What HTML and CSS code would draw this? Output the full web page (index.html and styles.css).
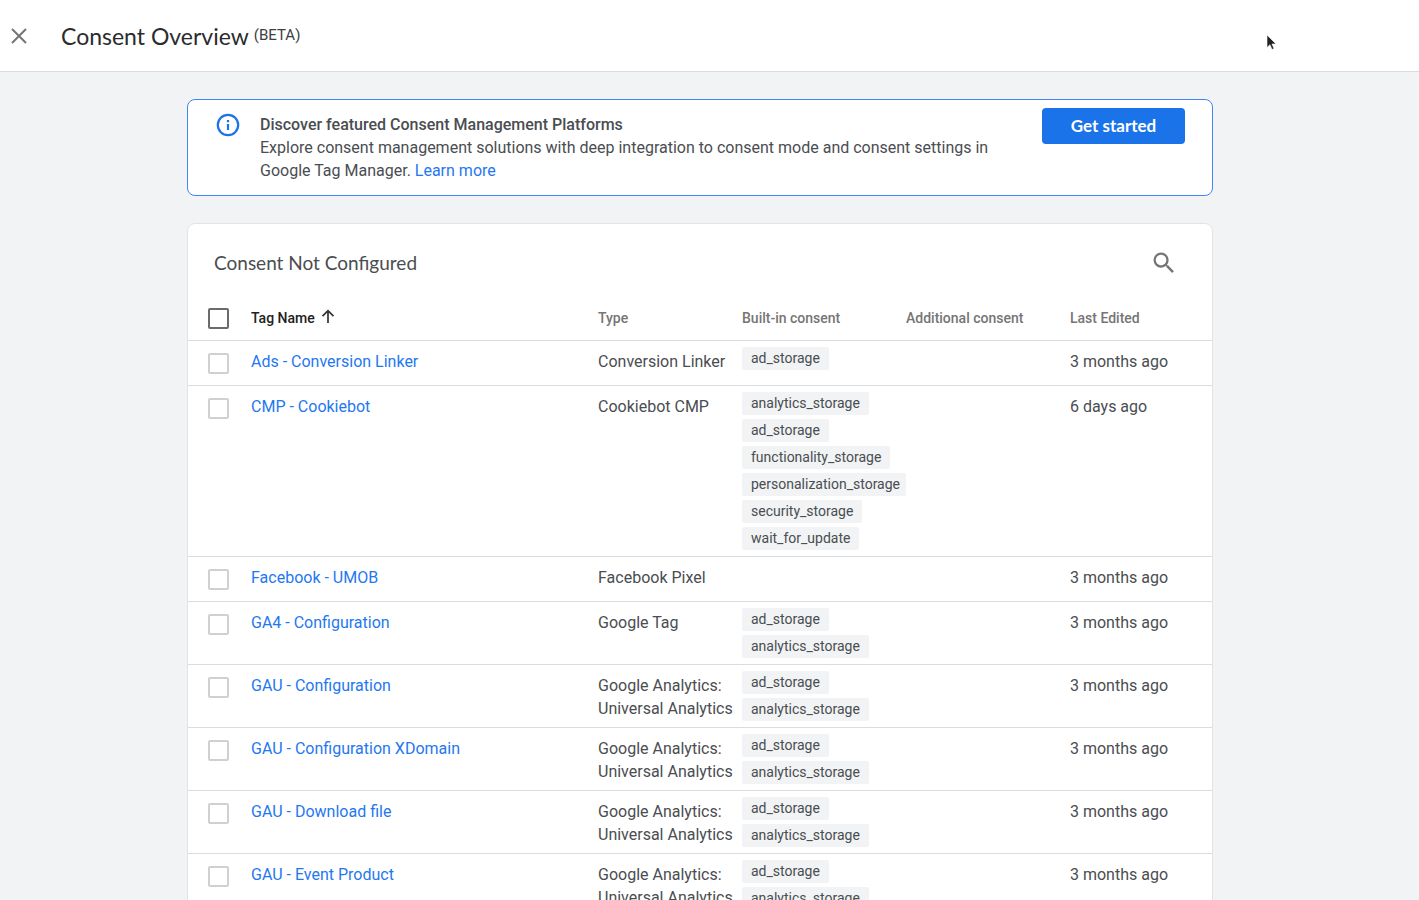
FILE: index.html
```html
<!DOCTYPE html>
<html lang="en">
<head>
<meta charset="utf-8">
<meta name="viewport" content="width=device-width, initial-scale=1">
<title>Consent Overview</title>
<link rel="stylesheet" href="styles.css">
</head>
<body>
<header class="topbar">
  <button class="icon-button" type="button" aria-label="Close">
    <svg width="16" height="16" viewBox="0 0 16 16" fill="none" stroke="#757575" stroke-width="2"><path d="M1 1l14 14M15 1L1 15"/></svg>
  </button>
  <h1 class="page-title">Consent Overview</h1>
  <span class="beta">(BETA)</span>
</header>
<svg class="cursor" width="14" height="18" viewBox="0 0 14 18" aria-hidden="true"><path d="M2 1v12.500l3-2.800 2 4.800 2-.9-2-4.600h4z" fill="#222" stroke="#fff" stroke-width=".6"/></svg>
<main class="content">
  <section class="notice">
    <svg class="notice-icon" width="24" height="24" viewBox="0 0 24 24" fill="none" stroke="#1a73e8" stroke-width="2.200"><circle cx="12" cy="12" r="10.200"/><path d="M12 11v6M12 7v2.200"/></svg>
    <div class="notice-text">
      <h2 class="notice-title">Discover featured Consent Management Platforms</h2>
      <p class="notice-body">Explore consent management solutions with deep integration to consent mode and consent settings in Google Tag Manager. <a class="link" href="#">Learn more</a></p>
    </div>
    <button class="primary-button" type="button">Get started</button>
  </section>
  <section class="card">
    <div class="card-header">
      <h2 class="card-title">Consent Not Configured</h2>
      <button class="icon-button" type="button" aria-label="Search">
        <svg width="28" height="28" viewBox="0 0 24 24" fill="#757575"><path d="M15.500 14h-.79l-.28-.27A6.470 6.470 0 0 0 16 9.500 6.500 6.500 0 1 0 9.500 16c1.610 0 3.090-.59 4.230-1.570l.27.28v.79l5 4.990L20.490 19l-4.990-5zm-6 0C7.010 14 5 11.990 5 9.500S7.010 5 9.500 5 14 7.010 14 9.500 11.990 14 9.500 14z"/></svg>
      </button>
    </div>
    <table class="tags">
      <colgroup><col class="col-check"><col><col class="col-type"><col class="col-consent"><col class="col-consent"><col class="col-date"></colgroup>
      <thead>
        <tr>
          <th><input class="check check-all" type="checkbox" aria-label="Select all tags"></th>
          <th class="sorted" aria-sort="ascending">Tag Name <svg class="sort-icon" width="14" height="14" viewBox="0 0 14 14" fill="none" stroke="#333" stroke-width="1.700"><path d="M7 14V2M1.500 7.200L7 1.700l5.500 5.500"/></svg></th>
          <th>Type</th><th>Built-in consent</th><th>Additional consent</th><th>Last Edited</th>
        </tr>
      </thead>
      <tbody>
        <tr><td><input class="check" type="checkbox" aria-label="Ads - Conversion Linker"></td><td><a class="link" href="#">Ads - Conversion Linker</a></td><td>Conversion Linker</td><td class="consents"><div class="chips"><span class="chip">ad_storage</span></div></td><td></td><td>3 months ago</td></tr>
        <tr><td><input class="check" type="checkbox" aria-label="CMP - Cookiebot"></td><td><a class="link" href="#">CMP - Cookiebot</a></td><td>Cookiebot CMP</td><td class="consents"><div class="chips"><span class="chip">analytics_storage</span><span class="chip">ad_storage</span><span class="chip">functionality_storage</span><span class="chip">personalization_storage</span><span class="chip">security_storage</span><span class="chip">wait_for_update</span></div></td><td></td><td>6 days ago</td></tr>
        <tr><td><input class="check" type="checkbox" aria-label="Facebook - UMOB"></td><td><a class="link" href="#">Facebook - UMOB</a></td><td>Facebook Pixel</td><td></td><td></td><td>3 months ago</td></tr>
        <tr><td><input class="check" type="checkbox" aria-label="GA4 - Configuration"></td><td><a class="link" href="#">GA4 - Configuration</a></td><td>Google Tag</td><td class="consents"><div class="chips"><span class="chip">ad_storage</span><span class="chip">analytics_storage</span></div></td><td></td><td>3 months ago</td></tr>
        <tr><td><input class="check" type="checkbox" aria-label="GAU - Configuration"></td><td><a class="link" href="#">GAU - Configuration</a></td><td>Google Analytics: Universal Analytics</td><td class="consents"><div class="chips"><span class="chip">ad_storage</span><span class="chip">analytics_storage</span></div></td><td></td><td>3 months ago</td></tr>
        <tr><td><input class="check" type="checkbox" aria-label="GAU - Configuration XDomain"></td><td><a class="link" href="#">GAU - Configuration XDomain</a></td><td>Google Analytics: Universal Analytics</td><td class="consents"><div class="chips"><span class="chip">ad_storage</span><span class="chip">analytics_storage</span></div></td><td></td><td>3 months ago</td></tr>
        <tr><td><input class="check" type="checkbox" aria-label="GAU - Download file"></td><td><a class="link" href="#">GAU - Download file</a></td><td>Google Analytics: Universal Analytics</td><td class="consents"><div class="chips"><span class="chip">ad_storage</span><span class="chip">analytics_storage</span></div></td><td></td><td>3 months ago</td></tr>
        <tr><td><input class="check" type="checkbox" aria-label="GAU - Event Product"></td><td><a class="link" href="#">GAU - Event Product</a></td><td>Google Analytics: Universal Analytics</td><td class="consents"><div class="chips"><span class="chip">ad_storage</span><span class="chip">analytics_storage</span></div></td><td></td><td>3 months ago</td></tr>
      </tbody>
    </table>
  </section>
</main>
</body>
</html>
```
FILE: styles.css
```css
* { box-sizing: border-box; }
html { scrollbar-width: none; }
body {
  margin: 0;
  background: #f1f3f4;
  color: #4a4d51;
  font: 16px/23px Roboto, sans-serif;
}
h1, h2, p { margin: 0; }
.topbar {
  display: flex;
  align-items: center;
  height: 72px;
  padding-left: 11px;
  background: #fff;
  border-bottom: 1px solid #dadce0;
}
.icon-button {
  display: flex;
  padding: 0;
  border: 0;
  background: none;
  cursor: pointer;
}
.page-title {
  margin-left: 34px;
  color: #2b2c2e;
  font: 400 23px/32px Lato, sans-serif;
}
.beta { margin-left: 5px; color: #3c4043; font-size: 15px; }
.cursor { position: absolute; left: 1265px; top: 34px; }
.content { padding: 27px 206px 28px 187px; }
.notice {
  display: flex;
  align-items: flex-start;
  padding: 8px 27px 13px 28px;
  background: #fff;
  border: 1px solid #4285f4;
  border-radius: 8px;
}
.notice-icon { flex: none; margin-top: 5px; }
.notice-text { flex: 1; margin: 6px 40px 0 20px; }
.notice-title { font-size: 16px; font-weight: 500; line-height: 22px; }
.link { color: #1f78f0; text-decoration: none; }
.primary-button {
  flex: none;
  width: 143px;
  height: 36px;
  border: 0;
  border-radius: 4px;
  background: #1a73e8;
  color: #fff;
  font: 700 17px/24px Lato, sans-serif;
}
.card {
  margin-top: 27px;
  background: #fff;
  border: 1px solid #e2e4e7;
  border-radius: 8px;
}
.card-header {
  display: flex;
  align-items: center;
  justify-content: space-between;
  height: 73px;
  padding: 5px 34px 0 26px;
}
.card-title { font: 400 19px/26px Lato, sans-serif; }
.tags { width: 100%; border-collapse: separate; border-spacing: 0; table-layout: fixed; }
.col-check { width: 63px; }
.col-type { width: 144px; }
.col-consent { width: 164px; }
.col-date { width: 142px; }
th {
  height: 44px;
  padding: 0;
  color: #757575;
  font-size: 14px;
  font-weight: 500;
  text-align: left;
  white-space: nowrap;
  border-bottom: 1px solid #dadce0;
}
.sorted { color: #212121; }
.sort-icon { margin-left: 3px; }
td {
  height: 45px;
  padding: 9px 0 7px;
  vertical-align: top;
  border-bottom: 1px solid #dadce0;
}
.check {
  display: block;
  appearance: none;
  width: 21px;
  height: 21px;
  margin: 3px 0 0 20px;
  border: 2px solid #d0d0d0;
  border-radius: 2px;
}
.check-all { margin-top: 0; border-color: #6b6b6b; }
.consents { padding: 6px 0; }
.chips { display: flex; flex-direction: column; align-items: flex-start; gap: 4px; }
.chip {
  max-width: 100%;
  padding: 0 9px;
  background: #f1f3f4;
  border-radius: 2px;
  font-size: 14px;
  line-height: 23px;
  white-space: nowrap;
}
```
